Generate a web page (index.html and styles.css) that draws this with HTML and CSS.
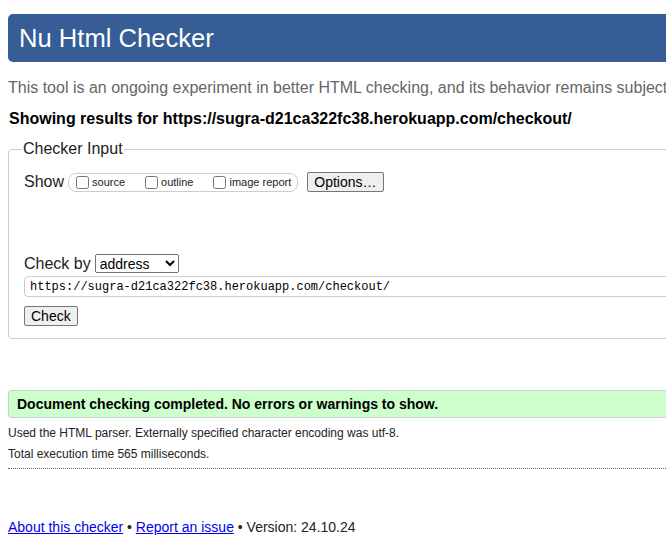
FILE: index.html
```html
<!DOCTYPE html>
<html lang="en">
<head>
<meta charset="utf-8">
<title>Nu Html Checker</title>
<link rel="stylesheet" href="styles.css">
</head>
<body>
<div class="page">
  <h1 class="title">Nu Html Checker</h1>
  <p class="intro">This tool is an ongoing experiment in better HTML checking, and its behavior remains subject to change</p>
  <p class="showing">Showing results for https://sugra-d21ca322fc38.herokuapp.com/checkout/</p>
  <fieldset class="checker">
    <legend class="legend">Checker Input</legend>
    <div class="show-row">
      <span class="label">Show</span>
      <span class="pill">
        <label class="opt"><input type="checkbox"><span>source</span></label>
        <label class="opt"><input type="checkbox"><span>outline</span></label>
        <label class="opt"><input type="checkbox"><span>image report</span></label>
      </span>
      <button class="btn options">Options…</button>
    </div>
    <div class="checkby-row">
      <span class="label">Check by</span>
      <select class="select"><option>address</option></select>
    </div>
    <input class="url" type="text" value="https://sugra-d21ca322fc38.herokuapp.com/checkout/">
    <div><button class="btn check">Check</button></div>
  </fieldset>
  <div class="success">Document checking completed. No errors or warnings to show.</div>
  <p class="meta">Used the HTML parser. Externally specified character encoding was utf-8.</p>
  <p class="meta">Total execution time 565 milliseconds.</p>
  <hr class="dotted">
  <p class="footer"><a href="#">About this checker</a> • <a href="#">Report an issue</a> • Version: 24.10.24</p>
</div>
</body>
</html>
```

FILE: styles.css
```css
html, body {
  margin: 0;
  padding: 0;
  background: #fff;
  overflow: hidden;
}
.page {
  width: 900px;
  padding: 14px 0 0 8px;
  font-family: "Liberation Sans", Arial, sans-serif;
  color: #222;
}
.title {
  margin: 0;
  height: 48px;
  box-sizing: border-box;
  background: #365d95;
  color: #fff;
  font-weight: normal;
  font-size: 25.6px;
  line-height: 48px;
  padding-left: 11px;
  border-radius: 5px;
}
.intro {
  margin: 16px 0 0 0;
  font-size: 16px;
  line-height: 20px;
  color: #666;
  white-space: nowrap;
}
.showing {
  margin: 11px 0 0 1px;
  font-size: 16px;
  line-height: 20px;
  font-weight: bold;
  color: #000;
  white-space: nowrap;
}
.checker {
  margin: 11px 0 0 0;
  border: 1px solid #ccc;
  border-radius: 4px;
  padding: 14px 16px 12px 15px;
  min-height: 150px;
}
.legend {
  font-size: 16px;
  padding: 0 1px;
  margin-left: -2px;
  color: #222;
}
.label {
  font-size: 16px;
}
.show-row {
  display: flex;
  align-items: center;
  gap: 4px;
}
.pill {
  display: inline-flex;
  align-items: center;
  border: 1px solid #ccc;
  border-radius: 8px;
  height: 17px;
  padding: 0 6px 0 0;
  gap: 20px;
}
.opt {
  display: inline-flex;
  align-items: center;
  font-size: 11px;
}
.opt:first-child input {
  margin-left: 7px;
}
.opt input {
  margin: 0 3px 0 0;
  width: 13px;
  height: 13px;
}
.btn {
  font-family: "Liberation Sans", Arial, sans-serif;
  font-size: 14px;
  color: #000;
  background: #efefef;
  border: 1px solid #767676;
  border-radius: 2px;
  padding: 1px 6px;
  height: 20px;
}
.options {
  margin-left: 5px;
}
.checkby-row {
  margin-top: 62px;
  display: flex;
  align-items: center;
  gap: 4px;
}
.select {
  font-family: "Liberation Sans", Arial, sans-serif;
  font-size: 14px;
  width: 84px;
  height: 19px;
  color: #000;
}
.url {
  display: block;
  margin-top: 3px;
  width: 800px;
  box-sizing: border-box;
  height: 21px;
  border: 1px solid #ccc;
  border-radius: 4px;
  font-family: "Liberation Mono", monospace;
  font-size: 12px;
  padding: 0 5px;
  color: #000;
}
.check {
  margin-top: 9px;
}
.success {
  margin-top: 51px;
  background: #ccffcc;
  border: 1px solid #ccc;
  border-radius: 3px;
  font-weight: bold;
  font-size: 14px;
  color: #000;
  padding: 5px 8px;
  white-space: nowrap;
}
.meta {
  margin: 9px 0 0 0;
  font-size: 12px;
  line-height: 12px;
  color: #222;
}
.meta + .meta {
  margin-top: 9px;
}
.dotted {
  margin: 8px 0 0 0;
  border: 0;
  border-top: 1px dotted #666;
  height: 0;
}
.footer {
  margin: 50px 0 0 0;
  font-size: 14px;
  color: #222;
}
.footer a {
  color: #0000ee;
}
```
